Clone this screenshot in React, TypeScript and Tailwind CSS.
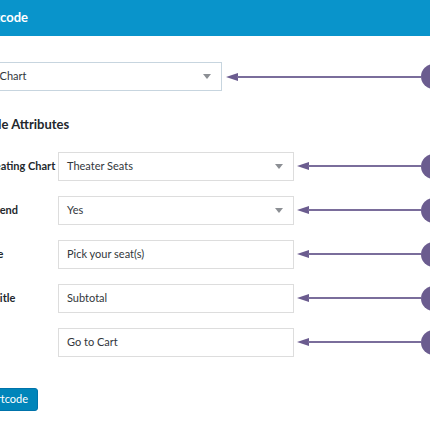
import type { ReactNode } from "react";

const font = { fontFamily: 'Lato, "Open Sans", sans-serif' };

const Arrow = ({ width }: { width: number }) => (
  <svg width={width} height="10" viewBox={`0 0 ${width} 10`} className="shrink-0">
    <polygon points="0,5 12,1 12,9" fill="#6b5c8f" />
    <line x1="11" y1="5" x2={width} y2="5" stroke="#7a6d9b" strokeWidth="2" />
  </svg>
);

const Marker = () => <div className="h-[25px] w-[25px] shrink-0 rounded-full bg-[#6b5c8f]" />;

const Caret = () => (
  <svg width="8" height="5" viewBox="0 0 8 5" className="shrink-0">
    <polygon points="0,0 8,0 4,5" fill="#8c8f94" />
  </svg>
);

type Field = { label: string; value: string; select?: boolean; indent: string };

const fields: Field[] = [
  { label: "Select a Seating Chart", value: "Theater Seats", select: true, indent: "pl-[5px]" },
  { label: "Show Legend", value: "Yes", select: true, indent: "pl-[10px]" },
  { label: "Modal Title", value: "Pick your seat(s)", indent: "pl-[5px]" },
  { label: "Subtotal Title", value: "Subtotal", indent: "pl-[7px]" },
  { label: "Button", value: "Go to Cart", indent: "pl-[5px]" },
];

const Box = ({ children, className }: { children: ReactNode; className: string }) => (
  <div className={`flex h-[29px] shrink-0 items-center justify-between border bg-white pl-[8px] pr-[10px] ${className}`}>
    {children}
  </div>
);

export default function App() {
  return (
    <div className="h-[430px] w-[430px] overflow-hidden bg-white" style={font}>
      <div className="-ml-[80px] w-[560px]">
        <div className="flex h-[36px] items-center bg-[#0994cb] pl-[12px]">
          <h1 className="whitespace-nowrap text-[13px] font-bold text-white">Insert Shortcode</h1>
        </div>

        <div className="flex flex-col pl-[23px] text-[11px] text-[#32373c]">
          <div className="mt-[26px] flex items-center">
            <Box className="w-[279px] border-[#c7d5df] pl-[17px]">
              <span className="whitespace-nowrap">Seating Chart</span>
              <Caret />
            </Box>
            <div className="ml-[4px] flex items-center">
              <Arrow width={195} />
              <Marker />
            </div>
          </div>

          <h2 className="ml-[6px] mt-[24px] whitespace-nowrap text-[13px] font-bold text-[#23282d]">
            Shortcode Attributes
          </h2>

          <div className="mt-[17px] flex flex-col gap-[15px]">
            {fields.map((f) => (
              <div key={f.label} className="flex items-center">
                <div className={`w-[115px] shrink-0 whitespace-nowrap font-bold text-[#23282d] ${f.indent}`}>{f.label}</div>
                <Box className="w-[236px] border-[#dddddd]">
                  <span className="whitespace-nowrap">{f.value}</span>
                  {f.select ? <Caret /> : null}
                </Box>
                <div className="ml-[3px] flex items-center">
                  <Arrow width={124} />
                  <Marker />
                </div>
              </div>
            ))}
          </div>

          <div className="mt-[31px] flex">
            <button className="-ml-[5px] h-[23px] whitespace-nowrap rounded-[3px] border border-[#0073aa] bg-[#0085ba] px-[9px] text-[11px] text-white">
              Insert Shortcode
            </button>
          </div>
        </div>
      </div>
    </div>
  );
}
